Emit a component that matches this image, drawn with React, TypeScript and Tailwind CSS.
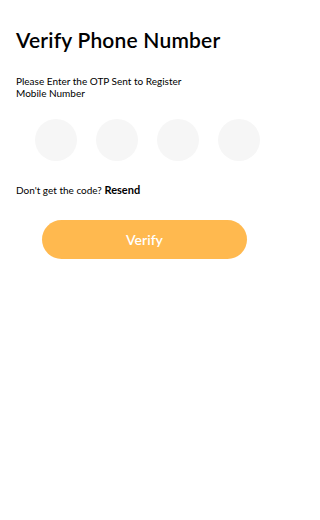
export default function App() {
    return (
        <div className="min-h-[520px] w-[296px] overflow-hidden bg-white px-4 pt-[26px] font-['Lato',sans-serif] text-black">
            <h1 className="text-[21px] font-semibold leading-[28px] tracking-[0.2px]">Verify Phone Number</h1>
            <p className="mt-[21px] w-[180px] text-[10px] leading-[12px]">
                Please Enter the OTP Sent to Register Mobile Number
            </p>
            <div className="mt-[20px] flex gap-[19px] pl-[19px]">
                {[0, 1, 2, 3].map((i) => (
                    <input
                        key={i}
                        maxLength={1}
                        className="h-[42px] w-[42px] min-w-0 rounded-full bg-[#f6f6f6] text-center text-lg outline-none"
                    />
                ))}
            </div>
            <p className="mt-[22px] text-[10px] leading-[14px]">
                Don't get the code? <span className="text-[11px] font-bold">Resend</span>
            </p>
            <div className="mt-[23px] pl-[26px]">
                <button className="h-[39px] w-[205px] rounded-full bg-[#ffb94f] text-[14px] font-semibold text-white">
                    Verify
                </button>
            </div>
        </div>
    );
}
